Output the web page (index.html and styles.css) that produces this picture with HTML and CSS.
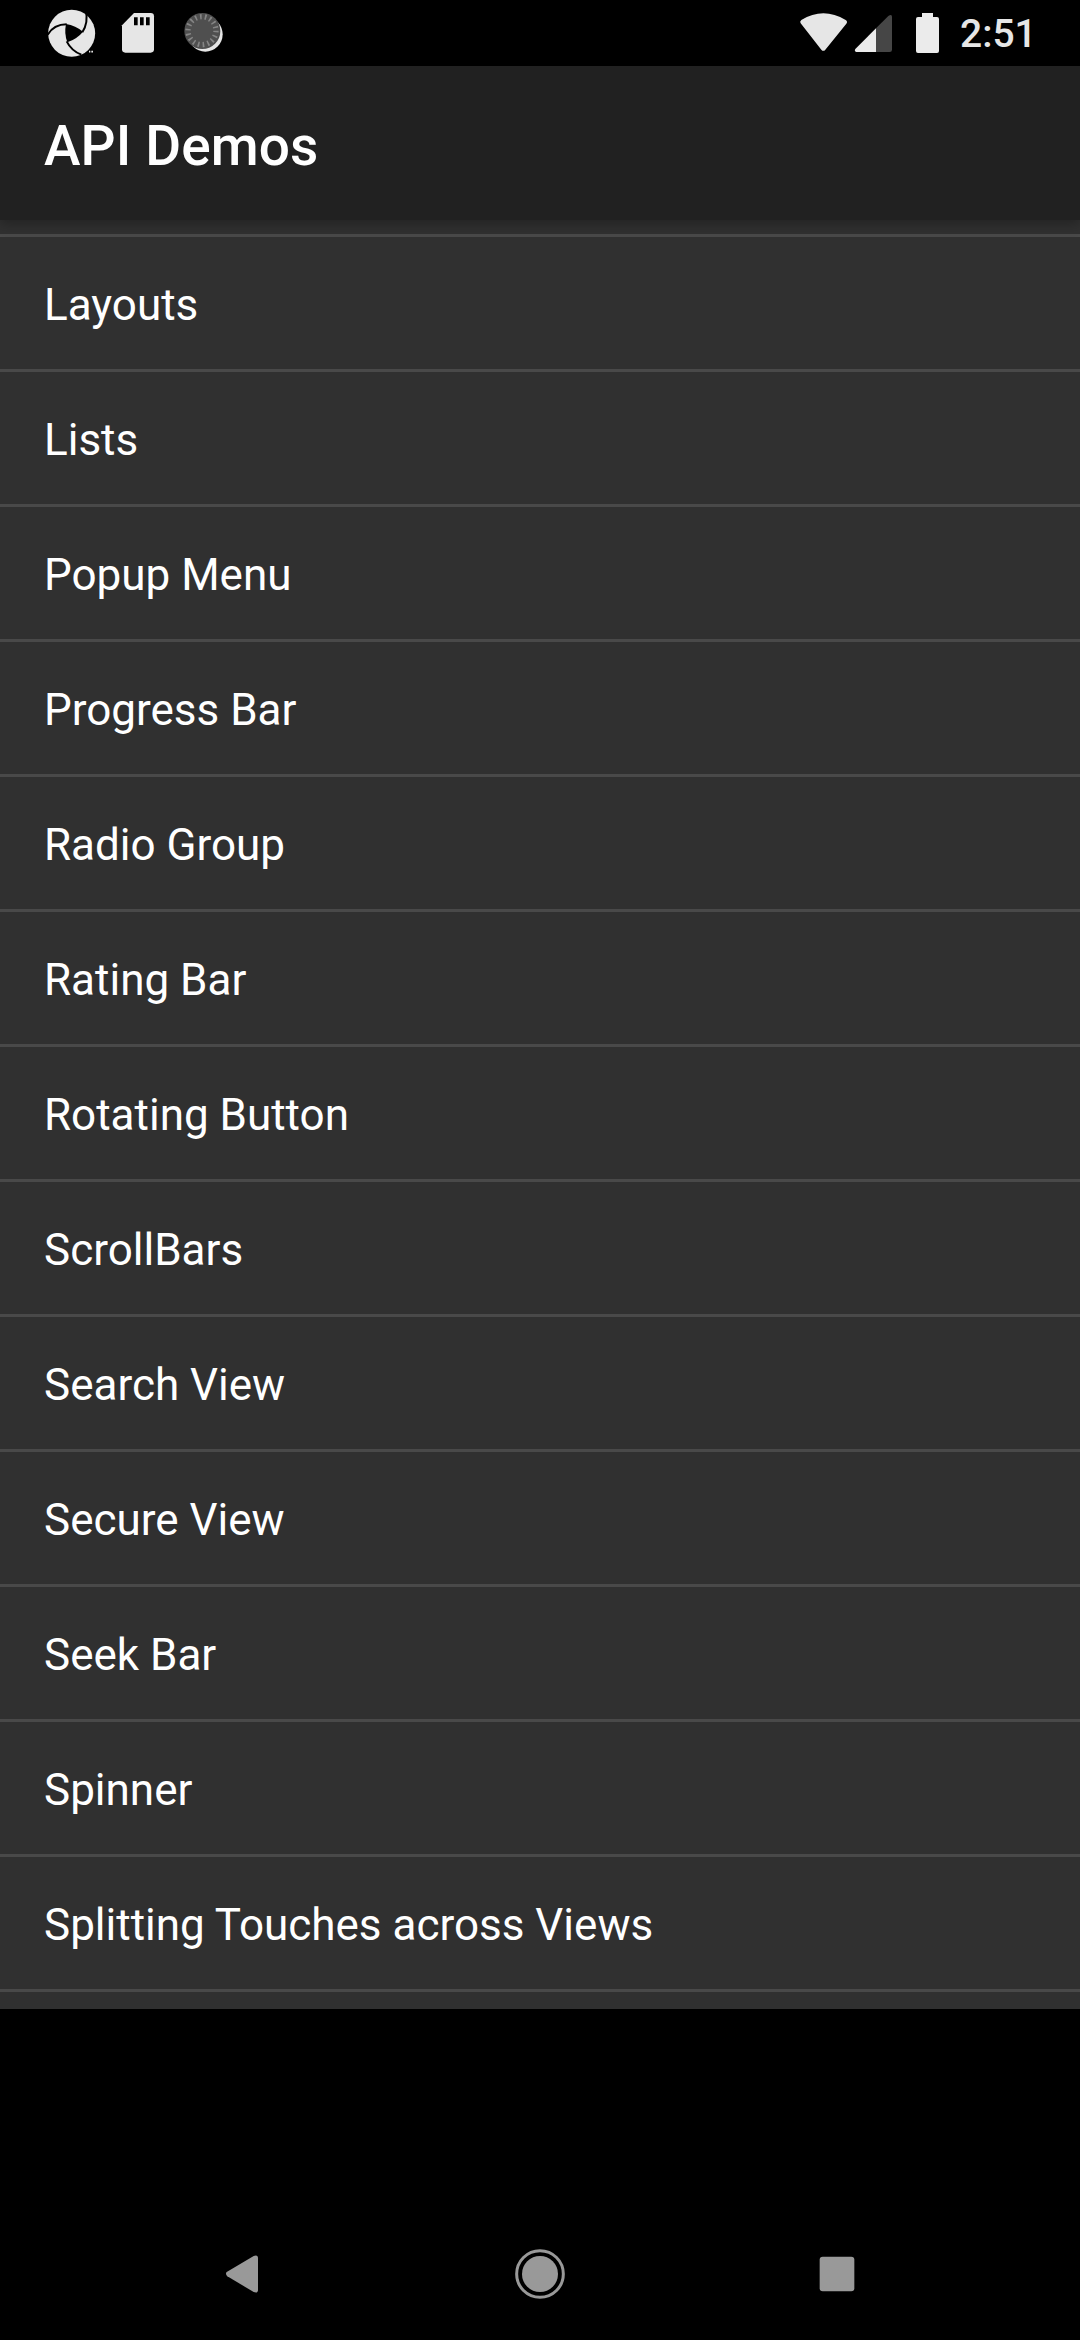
FILE: index.html
```html
<!DOCTYPE html>
<html lang="en">
<head>
<meta charset="utf-8">
<title>API Demos</title>
<link rel="stylesheet" href="styles.css">
</head>
<body>
<div class="screen">
  <header class="status">
    <svg class="status-left" width="200" height="66" viewBox="0 0 600 198">
      <circle cx="95" cy="100" r="70.500" fill="#e6e6e6"/>
      <path d="M78 72Q107 77 129 95Q112 116 82 127Q72 101 78 72Z" fill="#000"/>
      <path d="M23 104Q42 73 80 73M137 30Q146 67 127 97M80 124Q94 152 124 164" fill="none" stroke="#000" stroke-width="6"/>
      <path d="M138 166L146 150H162V166Z" fill="#000"/>
      <path d="M147 155h4M154 155h5" stroke="#e6e6e6" stroke-width="5"/>
      <path d="M282 39H332Q342 39 342 49V148Q342 158 332 158H256Q246 158 246 148V76Z" fill="#e6e6e6"/>
      <path d="M282 52h11v24h-11zM300 52h11v24h-11zM318 52h11v24h-11z" fill="#000"/>
      <circle cx="496" cy="103" r="52" fill="#e6e6e6"/>
      <circle cx="487" cy="93" r="54" fill="#4f4f4f"/>
      <circle cx="486" cy="92" r="42" fill="none" stroke="#858585" stroke-width="16" stroke-dasharray="5 9.661"/>
    </svg>
    <div class="status-right">
      <svg width="170" height="66" viewBox="0 0 510 198">
        <path d="M62 70Q58 65 64 60Q130 20 197 60Q204 65 199 71L136 149Q130 156 124 149Z" fill="#e6e6e6"/>
        <path d="M288 85L325 48Q336 40 336 51V149Q336 156 329 156H288Z" fill="#464646"/>
        <path d="M288 85V156H229Q222 154 226 147Z" fill="#ebebeb"/>
        <path d="M426 39H459V51H471Q477 51 477 57V153Q477 159 471 159H414Q408 159 408 153V57Q408 51 414 51H426Z" fill="#ebebeb"/>
      </svg>
      <span class="clock">2:51</span>
    </div>
  </header>
  <div class="appbar"><h1>API Demos</h1></div>
  <ul class="list">
    <li>Layouts</li>
    <li>Lists</li>
    <li>Popup Menu</li>
    <li>Progress Bar</li>
    <li>Radio Group</li>
    <li>Rating Bar</li>
    <li>Rotating Button</li>
    <li>ScrollBars</li>
    <li>Search View</li>
    <li>Secure View</li>
    <li>Seek Bar</li>
    <li>Spinner</li>
    <li>Splitting Touches across Views</li>
  </ul>
  <nav class="nav">
    <svg width="100" height="90" viewBox="0 0 300 270"><path d="M80 126L161 78Q174 73 174 85V179Q174 191 161 186L82 139Q75 132 80 126Z" fill="#999"/></svg>
    <svg width="100" height="90" viewBox="0 0 300 270"><circle cx="150" cy="132" r="54" fill="#999"/><circle cx="150" cy="132" r="70" fill="none" stroke="#999" stroke-width="9"/></svg>
    <svg width="100" height="90" viewBox="0 0 300 270"><rect x="119" y="80" width="104" height="104" rx="9" fill="#999"/></svg>
  </nav>
</div>
</body>
</html>
```
FILE: styles.css
```css
body {
  margin: 0;
  background: #000;
  color: #fff;
  font-family: Roboto, sans-serif;
}
.screen {
  display: flex;
  flex-direction: column;
  width: 1080px;
  height: 2340px;
  overflow: hidden;
}
.status {
  display: flex;
  justify-content: space-between;
  height: 66px;
  padding: 0 44px 0 40px;
}
.status svg {
  display: block;
  flex: none;
}
.status-right {
  display: flex;
  width: 256px;
}
.clock {
  margin-left: 10px;
  font-size: 39px;
  font-weight: 500;
  line-height: 69px;
  color: #e6e6e6;
}
.appbar {
  box-sizing: border-box;
  height: 154px;
  padding: 3px 44px 0;
  background: #212121;
  box-shadow: 0 4px 11px rgba(0, 0, 0, .28);
  z-index: 1;
}
.appbar h1 {
  margin: 0;
  font-size: 55px;
  font-weight: 500;
  line-height: 154px;
  letter-spacing: .1px;
}
.list {
  box-sizing: border-box;
  height: 1789px;
  margin: 0;
  padding: 14px 0 0;
  list-style: none;
  background: #303030;
}
.list li {
  box-sizing: border-box;
  height: 135px;
  padding: 2px 44px 0;
  border-top: 3px solid #494949;
  font-size: 44px;
  line-height: 132px;
}
.list::after {
  content: "";
  display: block;
  height: 3px;
  background: #494949;
}
.nav {
  display: flex;
  justify-content: space-between;
  margin-top: 221px;
  padding: 0 200px;
}
```
